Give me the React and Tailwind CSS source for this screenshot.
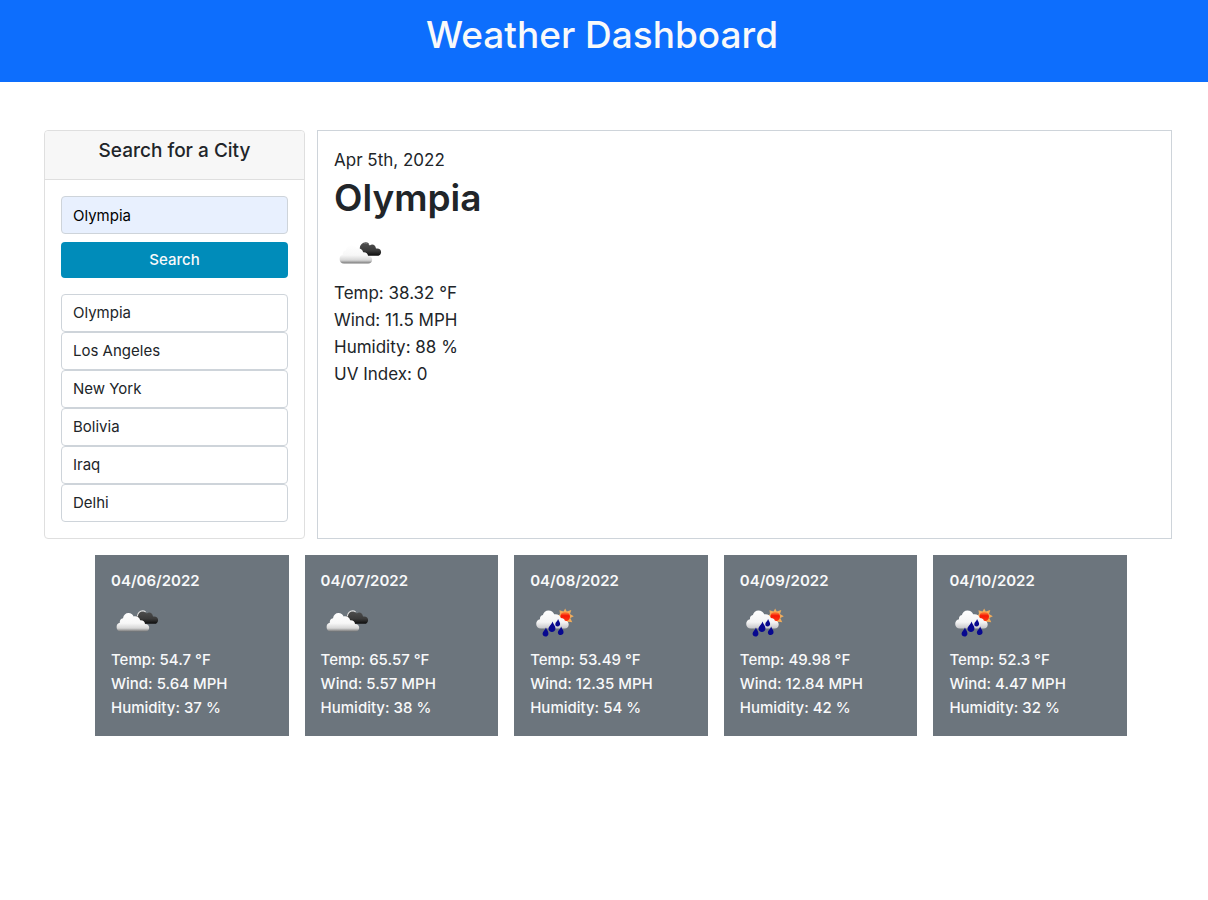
import { useState } from "react";

const cities = ["Olympia", "Los Angeles", "New York", "Bolivia", "Iraq", "Delhi"];

const forecast = [
  { date: "04/06/2022", icon: "clouds", temp: "54.7", wind: "5.64", humidity: "37" },
  { date: "04/07/2022", icon: "clouds", temp: "65.57", wind: "5.57", humidity: "38" },
  { date: "04/08/2022", icon: "rain", temp: "53.49", wind: "12.35", humidity: "54" },
  { date: "04/09/2022", icon: "rain", temp: "49.98", wind: "12.84", humidity: "42" },
  { date: "04/10/2022", icon: "rain", temp: "52.3", wind: "4.47", humidity: "32" },
];

function CloudsIcon({ id, rim }) {
  return (
    <svg viewBox="0 0 50 50" className="block size-[50px]" role="img" aria-label="Broken clouds">
      <defs>
        <linearGradient id={`${id}-light`} x1="0" y1="0" x2="0" y2="1">
          <stop offset="0" stopColor="#ffffff" />
          <stop offset="0.55" stopColor="#f7f7f7" />
          <stop offset="0.82" stopColor="#d6d6d6" />
          <stop offset="1" stopColor="#777777" />
        </linearGradient>
        <linearGradient id={`${id}-dark`} x1="0" y1="0" x2="0" y2="1">
          <stop offset="0" stopColor="#4e4e4e" />
          <stop offset="0.6" stopColor="#3a3a3a" />
          <stop offset="1" stopColor="#0c0c0c" />
        </linearGradient>
      </defs>
      <path d="M26 20C25 16 28 13 31.500 13.200C34 13.300 35.300 14.500 35.800 15.500C38 13.400 41.500 14.500 42 18.500C45 18 47.300 19.500 47.100 22.200C46.900 24.700 45.500 25.800 43.500 25.800H31Z" fill={`url(#${id}-dark)`} />
      <path d="M26.300 18.500C26.800 15.200 28.800 13 31.700 12.800C32.800 12.800 33.800 13.300 34.600 14" fill="none" stroke={rim} strokeWidth="1.100" />
      <path d="M10 33.500C7 33.500 5.600 31.700 5.600 29C5.600 26.500 7 25 8.800 24.700C8.500 22.500 9.700 20.500 12 20.300C12.500 17 14.700 15 17.500 15C20 15 21.700 16.300 22.700 18.400C25.500 17.700 28.500 19.500 29.200 22.200C32 22 34 23.500 34 26C36.500 26 38.200 27.500 38.200 29.800C38.200 32.200 36.500 33.500 34.200 33.500Z" fill={`url(#${id}-light)`} />
    </svg>
  );
}

function Drop({ x, y, size }) {
  return (
    <path
      d="M0.500 -5C1.200 -2.500 3.200 -1 3.100 1.400C3 3.300 1.600 4.400 0 4.400C-1.700 4.400 -3.100 3.200 -3.100 1.500C-3.100 -0.800 -0.200 -2.200 0.500 -5Z"
      fill="#08088f"
      transform={`translate(${x} ${y}) scale(${size})`}
    />
  );
}

function RainIcon({ id }) {
  return (
    <svg viewBox="0 0 50 50" className="block size-[50px]" role="img" aria-label="Rain with sun">
      <defs>
        <linearGradient id={`${id}-cloud`} x1="0" y1="0" x2="0" y2="1">
          <stop offset="0" stopColor="#ffffff" />
          <stop offset="0.65" stopColor="#f4f4f4" />
          <stop offset="1" stopColor="#c5c5c8" />
        </linearGradient>
        <linearGradient id={`${id}-sun`} x1="0" y1="0" x2="0" y2="1">
          <stop offset="0" stopColor="#ff9440" />
          <stop offset="0.4" stopColor="#f51806" />
          <stop offset="1" stopColor="#ff3a10" />
        </linearGradient>
      </defs>
      <path d="M35.200 10.600L36.800 13.600L41.300 11.900L40 16L43.800 18.300L40.300 20L42.300 24.200L38.300 23.700L36 26.500L33 24L28 25L30 20L28 18L30 15.900L29.500 12.300L33.500 13.600Z" fill="#f0ac5c" />
      <circle cx="35.200" cy="18.700" r="4.800" fill={`url(#${id}-sun)`} />
      <path d="M11 30.500C8 30.500 6.200 28.700 6.200 26C6.200 23.300 7.800 21.700 10 21.300C9.700 19 10.800 17.500 12.900 17.100C13.500 14.200 15.700 12.400 18.400 12.400C21.300 12.400 23.300 14 24.200 16.300C27.500 15.700 30.200 17.300 30.700 20C33 20 34.500 21 34.900 22.800C37.300 22.800 38.700 24.300 38.700 26.500C38.700 29 37 30.500 34.800 30.500Z" fill={`url(#${id}-cloud)`} />
      <Drop x="15.500" y="34.300" size="0.950" />
      <Drop x="22" y="29" size="1.120" />
      <Drop x="27.700" y="25" size="0.780" />
      <Drop x="30.700" y="33" size="0.920" />
    </svg>
  );
}

function SearchPanel() {
  const [city, setCity] = useState("Olympia");
  return (
    <aside className="rounded border border-[#dfdfdf] bg-white">
      <div className="rounded-t border-b border-[#dfdfdf] bg-[#f7f7f7] px-4 pt-2 pb-4">
        <h2 className="text-center text-[19px] leading-6 font-medium">
          <label htmlFor="city">Search for a City</label>
        </h2>
      </div>
      <div className="p-4">
        <form onSubmit={(event) => event.preventDefault()}>
          <input
            id="city"
            type="text"
            value={city}
            onChange={(event) => setCity(event.target.value)}
            className="mb-2 block h-[38px] w-full rounded border border-[#ced4da] bg-[#e8f0fe] px-[11px] text-[15px] leading-6 text-black"
          />
          <button type="submit" className="mb-4 block h-9 w-full rounded bg-[#008cba] text-[15px] leading-6 font-medium text-[#f8f9fa]">
            Search
          </button>
        </form>
        <ul>
          {cities.map((name) => (
            <li key={name}>
              <button
                type="button"
                onClick={() => setCity(name)}
                className="block h-[38px] w-full rounded border border-[#ced4da] bg-white px-[11px] text-left text-[15px] leading-6"
              >
                {name}
              </button>
            </li>
          ))}
        </ul>
      </div>
    </aside>
  );
}

function CurrentWeather() {
  return (
    <section className="border border-[#ced4da] p-4 text-[17px] leading-[27px]">
      <p>Apr 5th, 2022</p>
      <h2 className="mb-2 text-[37px] leading-[48px] font-semibold">Olympia</h2>
      <CloudsIcon id="current" rim="#4a4a4a" />
      <p>Temp: 38.32 °F</p>
      <p>Wind: 11.5 MPH</p>
      <p>Humidity: 88 %</p>
      <p>UV Index: 0</p>
    </section>
  );
}

function DayCard({ day }) {
  return (
    <article className="bg-[#6c757d] p-4 text-[15px] leading-6 font-medium text-[#f8f9fa]">
      <h3 className="mb-2 leading-[19px] font-semibold">{day.date}</h3>
      {day.icon === "clouds" ? (
        <CloudsIcon id={`day-${day.date.slice(3, 5)}`} rim="#e4e4e4" />
      ) : (
        <RainIcon id={`day-${day.date.slice(3, 5)}`} />
      )}
      <p>Temp: {day.temp} °F</p>
      <p>Wind: {day.wind} MPH</p>
      <p>Humidity: {day.humidity} %</p>
    </article>
  );
}

export default function App() {
  return (
    <div className="min-h-screen bg-white font-['Inter',sans-serif] text-[#212529]">
      <header className="bg-[#0d6efd] pt-[11px] pr-1 pb-[23px]">
        <h1 className="text-center text-[37px] leading-[48px] font-medium text-[#f8f9fa]">Weather Dashboard</h1>
      </header>
      <main className="pt-12">
        <div className="grid gap-3 pr-9 pl-11 md:grid-cols-[261fr_855fr]">
          <SearchPanel />
          <CurrentWeather />
        </div>
        <section aria-label="Five day forecast" className="mt-4 grid grid-cols-2 gap-4 pr-[81px] pl-[95px] md:grid-cols-5">
          {forecast.map((day) => (
            <DayCard key={day.date} day={day} />
          ))}
        </section>
      </main>
    </div>
  );
}
